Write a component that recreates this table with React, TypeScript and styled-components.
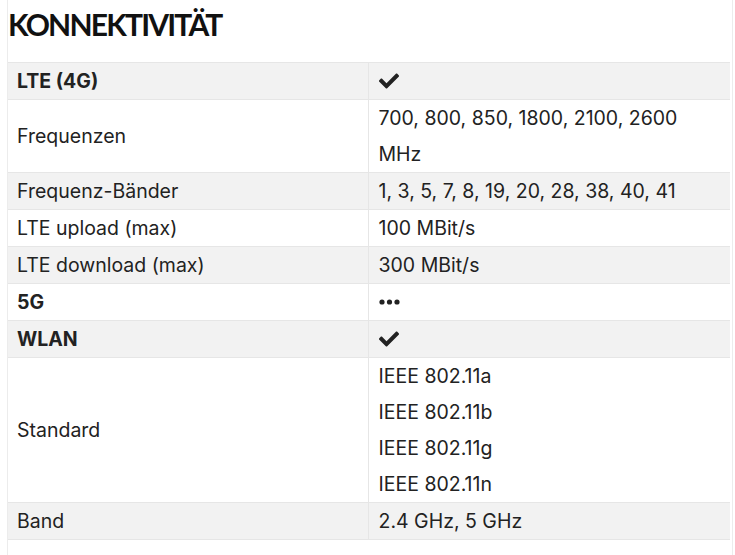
import React from 'react';
import styled, { createGlobalStyle } from 'styled-components';
import { FaCheck } from 'react-icons/fa';

const GlobalStyle = createGlobalStyle`
  body {
    margin: 0;
    background: #fff;
    font-family: Inter, "Noto Sans", sans-serif;
    color: #222;
  }
`;

const Wrapper = styled.div`
  margin-left: 7px;
  width: 726px;
  height: 555px;
  border-left: 1px solid #ececec;
  border-right: 1px solid #ececec;
  box-sizing: border-box;
`;

const Heading = styled.h2`
  margin: 0;
  padding: 5px 0 0 0;
  height: 62px;
  box-sizing: border-box;
  font-family: Lato, sans-serif;
  font-weight: 700;
  font-size: 30px;
  line-height: 38px;
  letter-spacing: -1.8px;
  color: #111;
`;

const Table = styled.table`
  width: 722px;
  border-collapse: collapse;
  table-layout: fixed;
  font-size: 19.5px;
  line-height: 36px;
`;

const Row = styled.tr<{ shaded: boolean }>`
  background: ${({ shaded }) => (shaded ? '#f2f2f2' : '#fff')};
  border-top: 1px solid #e6e6e6;
  border-bottom: 1px solid #e6e6e6;
`;

const Label = styled.td<{ bold?: boolean }>`
  box-sizing: border-box;
  width: 360px;
  padding: 0 9px;
  font-weight: ${({ bold }) => (bold ? 700 : 400)};
  vertical-align: middle;
  border-right: 1px solid #e6e6e6;
  white-space: nowrap;
`;

const Value = styled.td`
  padding: 0 10px;
  vertical-align: middle;
`;

const Line = styled.div`
  height: 36px;
`;

const IconCell = styled.div`
  height: 36px;
  display: flex;
  align-items: center;
`;

const Dots = () => (
  <svg width="21" height="6" viewBox="0 0 21 6">
    <circle cx="3" cy="3" r="2.6" fill="#222" />
    <circle cx="10.5" cy="3" r="2.6" fill="#222" />
    <circle cx="18" cy="3" r="2.6" fill="#222" />
  </svg>
);

type Item = { label: string; bold?: boolean; value: React.ReactNode; lines?: string[] };

const rows: Item[] = [
  { label: 'LTE (4G)', bold: true, value: <IconCell><FaCheck size={20} /></IconCell> },
  { label: 'Frequenzen', value: null, lines: ['700, 800, 850, 1800, 2100, 2600', 'MHz'] },
  { label: 'Frequenz-Bänder', value: '1, 3, 5, 7, 8, 19, 20, 28, 38, 40, 41' },
  { label: 'LTE upload (max)', value: '100 MBit/s' },
  { label: 'LTE download (max)', value: '300 MBit/s' },
  { label: '5G', bold: true, value: <IconCell><Dots /></IconCell> },
  { label: 'WLAN', bold: true, value: <IconCell><FaCheck size={20} /></IconCell> },
  { label: 'Standard', value: null, lines: ['IEEE 802.11a', 'IEEE 802.11b', 'IEEE 802.11g', 'IEEE 802.11n'] },
  { label: 'Band', value: '2.4 GHz, 5 GHz' },
];

export default function App() {
  return (
    <>
      <GlobalStyle />
      <Wrapper>
        <Heading>KONNEKTIVITÄT</Heading>
        <Table>
          <tbody>
            {rows.map((r, i) => (
              <Row key={r.label} shaded={i % 2 === 0}>
                <Label bold={r.bold}>{r.label}</Label>
                <Value>
                  {r.lines ? r.lines.map((l) => <Line key={l}>{l}</Line>) : r.value}
                </Value>
              </Row>
            ))}
          </tbody>
        </Table>
      </Wrapper>
    </>
  );
}
